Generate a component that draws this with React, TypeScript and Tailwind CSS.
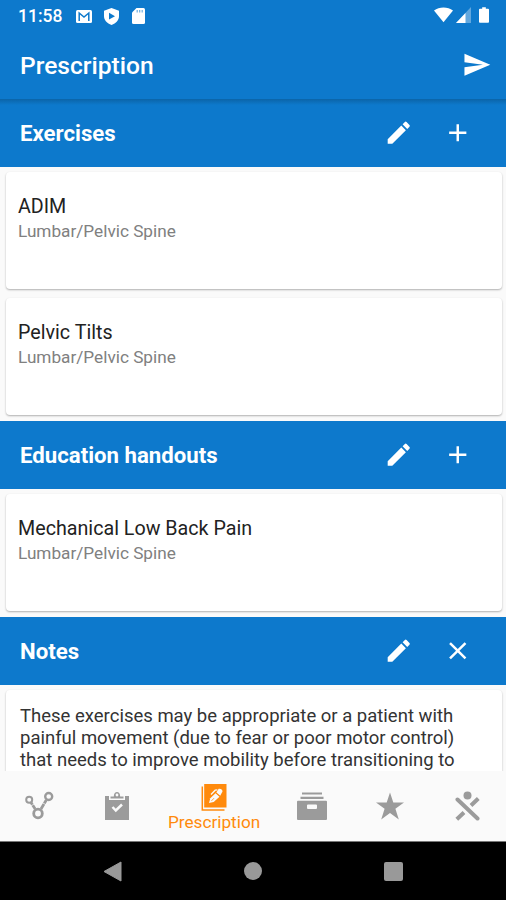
import type { ReactNode } from "react"

const exercises = [
  { title: "ADIM", region: "Lumbar/Pelvic Spine" },
  { title: "Pelvic Tilts", region: "Lumbar/Pelvic Spine" },
]

const handouts = [{ title: "Mechanical Low Back Pain", region: "Lumbar/Pelvic Spine" }]

function StatusBar() {
  return (
    <div className="flex h-8 shrink-0 items-center justify-between pl-[18px] pr-4">
      <div className="flex items-center">
        <span className="w-[58px] text-[17.5px] leading-8 font-medium">11:58</span>
        <svg width="16" height="13" viewBox="0 0 16 13">
          <rect width="16" height="13" rx="1.5" fill="#fff" />
          <path d="M3.2 11V3l4.8 4 4.8-4v8" fill="none" stroke="#0d79cc" strokeWidth="1.5" />
        </svg>
        <svg className="ml-3" width="15" height="17" viewBox="0 0 15 17">
          <path d="M7.5 0 15 2.8V8c0 4.2-3 7.5-7.5 9C3 15.5 0 12.2 0 8V2.8z" fill="#fff" />
          <path d="M5 4.8 11 8.2 5 11.6z" fill="#0d79cc" />
        </svg>
        <svg className="ml-[13px]" width="13" height="16" viewBox="0 0 13 16">
          <path d="M4.5 0H11.5Q13 0 13 1.5V14.5Q13 16 11.5 16H1.5Q0 16 0 14.5V4.5z" fill="#fff" />
          <path d="M5.2 2v2.6M7.7 2v2.6M10.2 2v2.6" stroke="#0d79cc" strokeOpacity=".6" strokeWidth="1.2" />
        </svg>
      </div>
      <div className="flex items-center pb-0.5">
        <svg width="19" height="16" viewBox="0 0 20 16">
          <path d="M0 3.2C5.5-1 14.5-1 20 3.2L10 15.5z" fill="#fff" />
        </svg>
        <svg className="ml-[3px]" width="15" height="16" viewBox="0 0 15 16">
          <path d="M15 0v16H0z" fill="#fff" fillOpacity=".35" />
          <path d="M9.5 5.9V16H0z" fill="#fff" />
        </svg>
        <svg className="mr-px ml-2" width="10" height="16" viewBox="0 0 11 17">
          <path d="M3.5 0h4v1.7H10q1 0 1 1V16q0 1-1 1H1q-1 0-1-1V2.7q0-1 1-1h2.5z" fill="#fff" />
        </svg>
      </div>
    </div>
  )
}

function MaterialIcon({ d, className = "" }: { d: string; className?: string }) {
  return (
    <svg className={className} width="29.5" height="29.5" viewBox="0 0 24 24" fill="currentColor">
      <path d={d} />
    </svg>
  )
}

const EDIT = "M3 17.25V21h3.75L17.81 9.94l-3.75-3.75L3 17.25zM20.71 7.04a.996.996 0 0 0 0-1.41l-2.34-2.34a.996.996 0 0 0-1.41 0l-1.83 1.83 3.75 3.75 1.83-1.83z"
const ADD = "M19 13h-6v6h-2v-6H5v-2h6V5h2v6h6v2z"
const CLOSE = "M19 6.41 17.59 5 12 10.59 6.41 5 5 6.41 10.59 12 5 17.59 6.41 19 12 13.41 17.59 19 19 17.59 13.41 12z"
const SEND = "M2.01 21 23 12 2.01 3 2 10l15 2-15 2z"

function SectionHeader({ title, action, className = "" }: { title: string; action: string; className?: string }) {
  return (
    <div className={`flex h-[68px] shrink-0 items-center bg-[#0d79cc] pl-5 pr-[34px] text-white ${className}`}>
      <h2 className="flex-1 pt-0.5 text-[22.2px] font-bold">{title}</h2>
      <button aria-label="Edit">
        <MaterialIcon d={EDIT} />
      </button>
      <button className="ml-[29.5px]" aria-label={action === ADD ? "Add" : "Clear"}>
        <MaterialIcon d={action} />
      </button>
    </div>
  )
}

function ExerciseCard({ title, region }: { title: string; region: string }) {
  return (
    <div className="h-[117px] rounded-[4px] bg-white px-3 pt-[22px] shadow-[0_1px_2px_rgba(0,0,0,0.3)]">
      <h3 className="text-[19.7px] leading-[26px] text-[#222]">{title}</h3>
      <p className="text-[17.2px] leading-[22px] text-[#808080]">{region}</p>
    </div>
  )
}

function CardList({ items }: { items: { title: string; region: string }[] }) {
  return (
    <div className="flex shrink-0 flex-col gap-[9px] pt-[5px] pr-1 pb-[6px] pl-1.5">
      {items.map((item) => (
        <ExerciseCard key={item.title} {...item} />
      ))}
    </div>
  )
}

function NavItem({ label, children }: { label?: string; children: ReactNode }) {
  return (
    <button className={label ? "flex w-[117px] flex-col items-center pt-[13px] text-[#ff8a0c]" : "flex w-[78px] flex-col items-center pt-5 text-[#9b9b9b]"}>
      {children}
      {label && <span className="-mt-px text-[17.2px] leading-[22px]">{label}</span>}
    </button>
  )
}

function BottomNav() {
  return (
    <nav className="flex h-[71px] shrink-0 justify-between border-b border-[#777] bg-[#fafafa]">
      <NavItem>
        <svg width="30" height="30" viewBox="0 0 30 30" fill="none" stroke="currentColor">
          <circle cx="5.2" cy="8.7" r="3" strokeWidth="2" />
          <circle cx="24.7" cy="5.5" r="3.5" strokeWidth="2.4" />
          <circle cx="14" cy="22.5" r="4.3" strokeWidth="2.8" />
          <path d="m7 11.6 4.2 6.4M22.3 9l-5.3 9" strokeWidth="2.8" />
          <path d="m6.5 15.2 5-3M17 11l5.5 3" stroke="#fafafa" strokeWidth=".7" />
        </svg>
      </NavItem>
      <NavItem>
        <svg width="30" height="30" viewBox="0 0 30 30">
          <path d="M3 5h24v24H3z" fill="currentColor" />
          <path d="M7 4.5V9h16V4.5z" fill="#fafafa" />
          <path d="M8.5 7.5V5.4h3.3c0-5.8 6.4-5.8 6.4 0h3.3v2.1z" fill="currentColor" />
          <circle cx="15" cy="4" r="1.4" fill="#fafafa" />
          <path d="m10.5 16 3.3 3.5 6.2-6" fill="none" stroke="#fafafa" strokeWidth="2.5" />
        </svg>
      </NavItem>
      <NavItem label="Prescription">
        <svg width="26" height="28" viewBox="0 0 26 28">
          <path d="M3.2 0H25.5v23.5H3.2z" fill="currentColor" />
          <path d="M1.3 2.5v23.5h22.2" fill="none" stroke="currentColor" strokeWidth="1.5" />
          <path d="m8 19 1.3-4.8 5.2-5 4 3.5-5.8 5.3z" fill="#fafafa" />
          <path d="m15.3 8.4 2.4-3.7q3.6-.4 3.8 2.8l-2.3 4.2z" fill="#fafafa" />
          <path d="m10 10.5 4.2-4.3 2.2-.3" fill="none" stroke="#fafafa" strokeWidth="1.3" />
          <path d="m10.5 16.8 2.5-2.6M14.6 8.5l4.3 3.8" stroke="currentColor" strokeWidth=".8" />
        </svg>
      </NavItem>
      <NavItem>
        <svg className="ml-0.5" width="30" height="30" viewBox="0 0 30 30" fill="currentColor">
          <path d="M5 1.5h20v2H5zM3.5 5.7h23V8h-23z" />
          <path fillRule="evenodd" d="M1 9.8h28q1 0 1 1V28q0 1-1 1H1q-1 0-1-1V10.8q0-1 1-1zM11 13.5q-1 0-1 1v2.5q0 1 1 1h8q1 0 1-1v-2.5q0-1-1-1z" />
        </svg>
      </NavItem>
      <NavItem>
        <svg className="ml-0.5" width="28" height="30" viewBox="0 0 28 30" fill="currentColor">
          <path d="m14 1.5 3.3 9.9H28l-8.6 6.3L22.8 28.5 14 21.9 5.2 28.5l3.4-10.8L0 11.4h10.7z" />
        </svg>
      </NavItem>
      <NavItem>
        <svg width="26" height="30" viewBox="0 0 26 30" fill="none" stroke="currentColor" strokeWidth="4">
          <circle cx="13.5" cy="4.5" r="4" fill="currentColor" stroke="none" />
          <path d="M3.5 8.5 23.5 27.5" strokeLinecap="round" />
          <path d="M24.3 7.5 17 14.5M10 21.5 2.8 28.3" />
        </svg>
      </NavItem>
    </nav>
  )
}

function SystemBar() {
  return (
    <div className="flex h-[58px] shrink-0 items-center justify-between bg-black px-[103px]">
      <svg width="19" height="21" viewBox="0 0 19 21">
        <path d="M18 1v19L1 10.5z" fill="#999" stroke="#999" strokeLinejoin="round" />
      </svg>
      <div className="size-[18px] rounded-full bg-[#999]" />
      <div className="size-[19px] rounded-[2px] bg-[#999]" />
    </div>
  )
}

export default function App() {
  return (
    <div className="flex h-[900px] w-[506px] flex-col overflow-hidden bg-[#fafafa] font-[Roboto,sans-serif]">
      <header className="flex h-[99px] shrink-0 flex-col bg-[#0d79cc] text-white">
        <StatusBar />
        <div className="flex flex-1 items-center justify-between pr-[15px] pb-0.5 pl-5">
          <h1 className="pt-[3px] text-[24.6px] font-medium">Prescription</h1>
          <MaterialIcon d={SEND} />
        </div>
      </header>

      <main className="flex min-h-0 flex-1 flex-col overflow-hidden">
        <SectionHeader title="Exercises" action={ADD} className="bg-linear-to-b from-[#0b64a8] to-[#0d79cc] to-[6px]" />
        <CardList items={exercises} />
        <SectionHeader title="Education handouts" action={ADD} />
        <CardList items={handouts} />
        <SectionHeader title="Notes" action={CLOSE} />
        <div className="mt-[5px] mr-1 ml-1.5 h-[120px] shrink-0 rounded-[4px] bg-white px-3.5 pt-[15px] shadow-[0_1px_2px_rgba(0,0,0,0.3)]">
          <p className="text-[18.5px] leading-[22px] whitespace-nowrap text-[#333]">
            These exercises may be appropriate or a patient with
            <br />
            painful movement (due to fear or poor motor control)
            <br />
            that needs to improve mobility before transitioning to
          </p>
        </div>
      </main>

      <BottomNav />
      <SystemBar />
    </div>
  )
}
